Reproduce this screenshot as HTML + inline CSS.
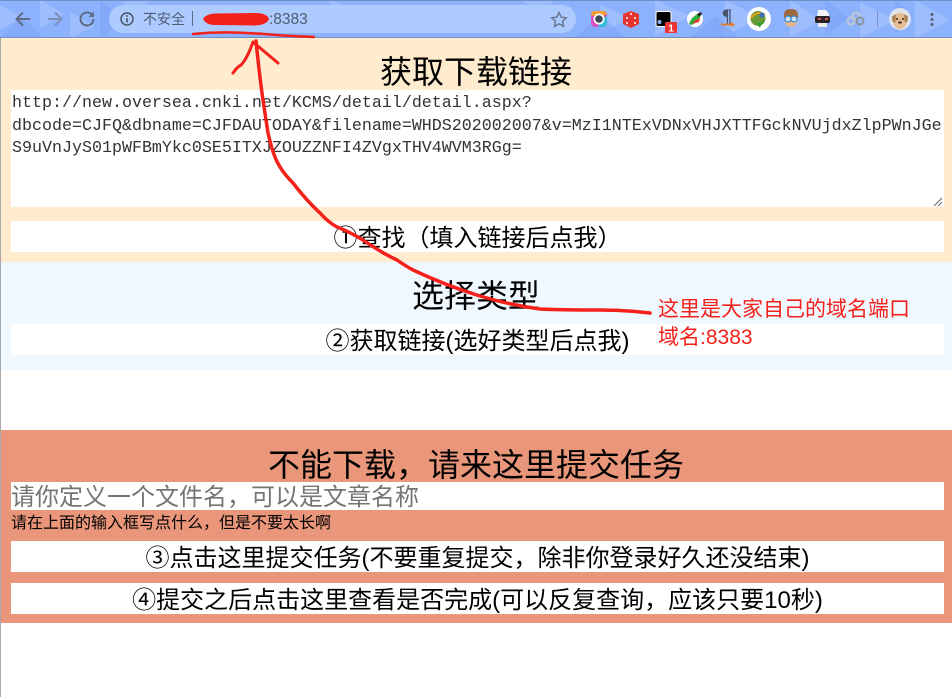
<!DOCTYPE html>
<html lang="zh"><head><meta charset="utf-8"><title>获取下载链接</title>
<style>
html,body{margin:0;padding:0;width:952px;height:697px;overflow:hidden;background:#fff}
body{position:relative;font-family:"Liberation Sans","Noto Sans CJK SC",sans-serif;color:#000}
div{position:absolute;white-space:pre;box-sizing:border-box}
.w{left:11px;width:933px;background:#fff}
.c{left:0;width:952px;text-align:center}
.b{font-size:24px;line-height:35px;height:31px;text-align:center;left:11px;width:933px;background:#fff}
.t{font-size:32px;line-height:40px}
svg{position:absolute;left:0;top:0}
</style></head><body>
<div style="left:0;top:38px;width:952px;height:224px;background:#ffebcd"></div>
<div style="left:0;top:262px;width:952px;height:108px;background:#f0f8ff"></div>
<div style="left:0;top:430px;width:952px;height:193px;background:#e9967a"></div>
<div style="left:0;top:38px;width:1px;height:659px;background:#a8a8a8"></div>

<div class="c t" style="top:52px">获取下载链接</div>
<div class="w" style="top:90px;height:117px"></div>
<div style="left:12px;top:93px;font:16.67px/22.5px 'Liberation Mono',monospace;color:#333">http://new.oversea.cnki.net/KCMS/detail/detail.aspx?
dbcode=CJFQ&amp;dbname=CJFDAUTODAY&amp;filename=WHDS202002007&amp;v=MzI1NTExVDNxVHJXTTFGckNVUjdxZlpPWnJGe
S9uVnJyS01pWFBmYkc0SE5ITXJZOUZZNFI4ZVgxTHV4WVM3RGg=</div>
<div class="b" style="top:221px;line-height:36px">①查找（填入链接后点我）</div>

<div class="c t" style="top:276px">选择类型</div>
<div class="b" style="top:324px;line-height:36px">②获取链接(选好类型后点我)</div>

<div class="c t" style="top:445px">不能下载，请来这里提交任务</div>
<div class="w" style="top:482px;height:28px;font-size:24px;line-height:32px;color:#757575;overflow:hidden">请你定义一个文件名，可以是文章名称</div>
<div style="left:11px;top:515px;font-size:16px;line-height:18px">请在上面的输入框写点什么，但是不要太长啊</div>
<div class="b" style="top:541px">③点击这里提交任务(不要重复提交，除非你登录好久还没结束)</div>
<div class="b" style="top:583px">④提交之后点击这里查看是否完成(可以反复查询，应该只要10秒)</div>

<svg width="952" height="38" viewBox="0 0 952 38">
<rect width="952" height="38" fill="#8db2fd"/>
<g fill="#a5c2ff" opacity=".7">
<polygon points="0,5 22,17 0,30"/><polygon points="40,0 64,14 40,28"/><polygon points="70,12 95,26 70,38"/><polygon points="120,0 150,0 135,14"/><polygon points="330,0 360,12 330,14"/><polygon points="520,0 556,0 540,12"/><polygon points="600,4 630,18 600,34"/><polygon points="655,0 690,16 655,36"/><polygon points="725,0 760,18 725,36"/><polygon points="790,0 820,20 790,38"/><polygon points="860,2 895,20 860,38"/><polygon points="915,0 950,20 915,38"/>
</g>
<g fill="#7ba3f5" opacity=".55">
<polygon points="22,17 44,38 0,38"/><polygon points="100,0 125,20 100,38"/><polygon points="575,38 600,14 625,38"/><polygon points="690,38 715,16 740,38"/><polygon points="825,0 850,18 825,36"/><polygon points="895,0 915,16 895,34"/>
</g>
<rect x="0" y="0" width="952" height="1" fill="#6f8fc9"/>
<rect x="0" y="37" width="952" height="1" fill="#7490c4"/>
<rect x="109" y="5" width="467" height="28" rx="14" fill="#aecbff"/>
<path d="M30 19H17M23 12.500 16.500 19 23 25.500" fill="none" stroke="#5d6b85" stroke-width="2"/>
<path d="M48 19H61M55 12.500 61.500 19 55 25.500" fill="none" stroke="#7b90ba" stroke-width="2"/>
<path d="M93.500 19A6.500 6.500 0 1 1 91.500 14.300" fill="none" stroke="#5d6b85" stroke-width="2"/><path d="M94 11.500V17H88.500Z" fill="#5d6b85"/>
<circle cx="127" cy="19" r="6" fill="none" stroke="#4a5568" stroke-width="1.500"/><rect x="126.200" y="18" width="1.600" height="4.500" fill="#4a5568"/><rect x="126.200" y="15.200" width="1.600" height="1.600" fill="#4a5568"/>
<text x="143" y="24" font-size="14" fill="#4f5b70" font-family="'Liberation Sans','Noto Sans CJK SC',sans-serif">不安全</text>
<rect x="192" y="11" width="1" height="15" fill="#5d6b85"/>
<text x="269" y="24" font-size="15.500" fill="#4f5b70" font-family="'Liberation Sans',sans-serif">:8383</text>
<path d="M559 12.500l2.200 4.600 5 .7-3.600 3.500.9 5-4.500-2.400-4.500 2.400.9-5-3.600-3.500 5-.7Z" fill="none" stroke="#6b7890" stroke-width="1.500"/>
<rect x="591" y="11" width="16" height="16" rx="4" fill="#d94fc4"/><path d="M591 15q0-4 4-4h8q3 0 4 3l-8 4Z" fill="#f0a030"/><path d="M607 16v7q0 4-4 4h-5l3-8Z" fill="#35c0d8"/><circle cx="599" cy="19" r="5.500" fill="#fff"/><circle cx="599" cy="19" r="3.800" fill="#3d4a5c"/>
<path d="M623 14l8-3 8 3v10l-8 4-8-4Z" fill="#e6352e"/><circle cx="627" cy="18" r="1" fill="#fff"/><circle cx="635" cy="18" r="1" fill="#fff"/><circle cx="631" cy="14" r="1" fill="#fff"/><circle cx="627" cy="23" r="1" fill="#fff"/><circle cx="635" cy="23" r="1" fill="#fff"/>
<rect x="656" y="11.500" width="15" height="15" rx="2" fill="#000" stroke="#fff"/><circle cx="659.500" cy="22" r="2" fill="#8cb4f0"/>
<rect x="665" y="22" width="12" height="11" rx="1" fill="#ee3333"/><text x="671" y="31.500" text-anchor="middle" font-size="10.500" font-weight="bold" fill="#fff" font-family="'Liberation Sans',sans-serif">1</text>
<circle cx="695" cy="19" r="8" fill="#fff"/><path d="M689 24q2-7 10-11l2 2q-3 8-10 10Z" fill="#2fae3e"/><path d="M692 24q3-4 8-6l-1 4Z" fill="#e6352e"/><path d="M697 14l4-2 1 2-3 3Z" fill="#222"/>
<text x="727" y="22" text-anchor="middle" font-size="19" font-weight="bold" fill="#46526a" font-family="'Liberation Serif',serif">¶</text>
<path d="M721 24.500h11" stroke="#e87a20" stroke-width="1.800"/><path d="M731 22l4 2.500-4 2.500Z" fill="#e87a20"/>
<circle cx="759" cy="19" r="12" fill="#fff"/><circle cx="758" cy="18.500" r="7.500" fill="#6b9a3a"/><path d="M751 18q6-8 14-3" fill="none" stroke="#e0a020" stroke-width="2"/><path d="M753 21q5 4 12 0l-4 4-1 3-2-3Z" fill="#2aa02a"/><circle cx="762" cy="15" r="2.500" fill="#3a6fc0"/>
<path d="M784 15q0-6 7-6t7 6v3h-14Z" fill="#9c6a3c"/><path d="M785 18h12v5q-2 4-6 4t-6-4Z" fill="#e8b48c"/><circle cx="788" cy="19" r="3" fill="#cde3fa" stroke="#3f86c8" stroke-width="1.200"/><circle cx="794" cy="19" r="3" fill="#cde3fa" stroke="#3f86c8" stroke-width="1.200"/>
<path d="M818 10h8l3 4v3h-12Z" fill="#f4f4f4"/><rect x="815" y="16" width="15" height="7" rx="2" fill="#2c2226"/><rect x="818" y="18" width="3" height="2" fill="#c85a50"/><rect x="825" y="18" width="3" height="2" fill="#c85a50"/><path d="M818 23h9v4h-9Z" fill="#ececec"/>
<g fill="none" stroke="#c0c6d2" stroke-width="2"><circle cx="851" cy="21" r="3.500"/><circle cx="856" cy="16" r="3.500"/></g><circle cx="860" cy="21" r="3.500" fill="none" stroke="#8c929c" stroke-width="2"/>
<rect x="877" y="11" width="1" height="16" fill="#7793c8"/>
<circle cx="900" cy="19" r="11" fill="#dfe3ea"/><path d="M893 19q1-6 7-6t7 6l-1 6q-3 4-6 4t-6-4Z" fill="#e3bd90"/><path d="M892 17q2-3 4-2l-1 8q-3 0-3-6ZM908 17q-2-3-4-2l1 8q3 0 3-6Z" fill="#b08050"/><circle cx="897" cy="19" r="1" fill="#3a2a20"/><circle cx="903" cy="19" r="1" fill="#3a2a20"/><ellipse cx="900" cy="22.500" rx="1.800" ry="1.200" fill="#4a3428"/>
<circle cx="932" cy="14.500" r="1.500" fill="#56627a"/><circle cx="932" cy="19.500" r="1.500" fill="#56627a"/><circle cx="932" cy="24.500" r="1.500" fill="#56627a"/>
</svg>

<svg width="952" height="697" viewBox="0 0 952 697">
<path d="M934 206l8-8M938 206l4-4" stroke="#666" stroke-width="1"/>
<path d="M203 19q3-5 12-5.500l40-.5q12 0 14 6q-2 6-14 6.500l-40-.5q-9 0-12-6Z" fill="#f4211b"/>
<path d="M193 34q20-2 40-1.500t50 3l31 1.500" fill="none" stroke="#f4211b" stroke-width="2.500" stroke-linecap="round"/>
<path d="M233 73q4-6 8-8 6-6 12-23l25 21" fill="none" stroke="#f4211b" stroke-width="3" stroke-linecap="round" stroke-linejoin="round"/>
<path d="M256 41Q260 80 263 100T268 133Q272 150 275 157Q280 170 293 183Q306 200 320 213Q328 222 337 227Q350 232 363 240Q380 252 397 260Q404 265 413 270Q447 286 480 296Q510 305 540 309Q560 310 600 310Q625 310 650 313" fill="none" stroke="#f4211b" stroke-width="3.500" stroke-linecap="round" stroke-linejoin="round"/>
<text x="658" y="316" font-size="21" fill="#f4211b" font-family="'Liberation Sans','Noto Sans CJK SC',sans-serif">这里是大家自己的域名端口</text>
<text x="658" y="344" font-size="21" fill="#f4211b" font-family="'Liberation Sans','Noto Sans CJK SC',sans-serif">域名:8383</text>
</svg>
</body></html>
